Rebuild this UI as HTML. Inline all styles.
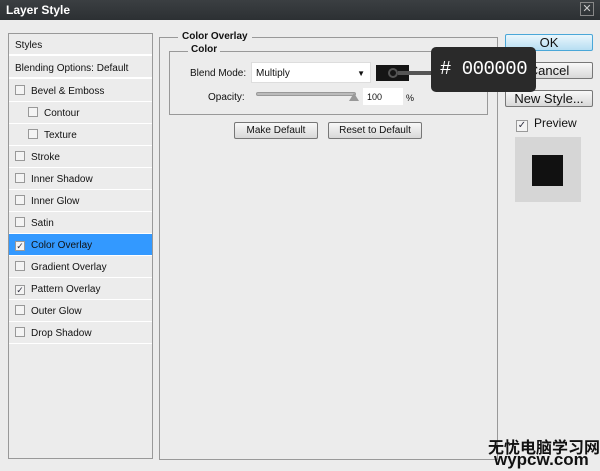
<!DOCTYPE html>
<html><head><meta charset="utf-8"><style>
*{margin:0;padding:0;box-sizing:border-box}
body{width:600px;height:471px;background:#ececec;font-family:"Liberation Sans",Tahoma,sans-serif;font-size:10px;color:#111;position:relative;overflow:hidden}
.a{position:absolute}
.title{left:0;top:0;width:600px;height:20px;background:linear-gradient(#3b3f42,#2c3033);color:#fff;font-weight:bold;font-size:12px;padding:3px 6px}
.close{right:6px;top:2px;width:14px;height:14px;border:1px solid #888;color:#ccc;font-size:11px;line-height:12px;text-align:center}
.left{left:8px;top:33px;width:145px;height:426px;border:1px solid #999;background:#ececec}
.row{position:absolute;left:0;width:143px;height:22px;border-bottom:1px solid #fff;line-height:23px;padding-left:6px}
.cb{display:inline-block;width:10px;height:10px;border:1px solid #999;background:#f4f4f4;vertical-align:-1px;margin-right:6px;font-size:9px;line-height:8px;color:#334;text-align:center}
.sel{background:#3399ff}
.btn{border:1px solid #777;border-radius:2px;background:linear-gradient(#f8f8f8,#d8d8d8);text-align:center;font-size:10px}
</style></head><body>
<div class="a title">Layer Style</div>
<div class="a close">✕</div>

<div class="a left">
<div class="row" style="top:0;border-bottom:2px solid #fff">Styles</div>
<div class="row" style="top:23px;border-bottom:2px solid #fff">Blending Options: Default</div>
<div class="row" style="top:46px"><span class="cb"></span>Bevel &amp; Emboss</div>
<div class="row" style="top:68px;padding-left:19px"><span class="cb"></span>Contour</div>
<div class="row" style="top:90px;padding-left:19px"><span class="cb"></span>Texture</div>
<div class="row" style="top:112px"><span class="cb"></span>Stroke</div>
<div class="row" style="top:134px"><span class="cb"></span>Inner Shadow</div>
<div class="row" style="top:156px"><span class="cb"></span>Inner Glow</div>
<div class="row" style="top:178px"><span class="cb"></span>Satin</div>
<div class="row sel" style="top:200px"><span class="cb">✓</span>Color Overlay</div>
<div class="row" style="top:222px"><span class="cb"></span>Gradient Overlay</div>
<div class="row" style="top:244px"><span class="cb">✓</span>Pattern Overlay</div>
<div class="row" style="top:266px"><span class="cb"></span>Outer Glow</div>
<div class="row" style="top:288px"><span class="cb"></span>Drop Shadow</div>
</div>

<div class="a" style="left:159px;top:37px;width:339px;height:423px;border:1px solid #999"></div>
<div class="a" style="left:178px;top:31px;background:#ececec;padding:0 4px;font-weight:bold">Color Overlay</div>
<div class="a" style="left:169px;top:51px;width:319px;height:64px;border:1px solid #999"></div>
<div class="a" style="left:188px;top:44px;background:#ececec;padding:0 3px;font-weight:bold">Color</div>
<div class="a" style="left:190px;top:68px">Blend Mode:</div>
<div class="a" style="left:251px;top:62px;width:120px;height:21px;background:#fff;border:1px solid #ddd;padding:5px 4px">Multiply<span style="position:absolute;right:5px;top:6px;font-size:8px">▼</span></div>
<div class="a" style="left:376px;top:65px;width:33px;height:16px;background:#151515"></div>
<div class="a" style="left:208px;top:92px">Opacity:</div>
<div class="a" style="left:256px;top:92px;width:100px;height:4px;background:#bbb;border:1px solid #999;border-radius:2px"></div>
<div class="a" style="left:349px;top:93px;width:0;height:0;border-left:5px solid transparent;border-right:5px solid transparent;border-bottom:8px solid #999"></div>
<div class="a" style="left:363px;top:88px;width:40px;height:17px;background:#fff;padding:4px 4px;font-size:9px">100</div>
<div class="a" style="left:406px;top:93px;font-size:9px">%</div>
<div class="a btn" style="left:234px;top:122px;width:84px;height:17px;line-height:16px">Make Default</div>
<div class="a btn" style="left:328px;top:122px;width:94px;height:17px;line-height:16px">Reset to Default</div>

<div class="a btn" style="left:505px;top:34px;width:88px;height:17px;border-color:#4aa7d8;background:linear-gradient(#eaf6fc,#b7def2);font-size:13px;line-height:15px">OK</div>
<div class="a btn" style="left:505px;top:62px;width:88px;height:17px;font-size:13px;line-height:15px">Cancel</div>
<div class="a btn" style="left:505px;top:90px;width:88px;height:17px;font-size:13px;line-height:15px">New Style...</div>
<div class="a" style="left:516px;top:116px;font-size:12px"><span class="cb" style="width:12px;height:12px;font-size:10px;line-height:10px">✓</span>Preview</div>
<div class="a" style="left:515px;top:137px;width:66px;height:65px;background:#d6d6d6"></div>
<div class="a" style="left:532px;top:155px;width:31px;height:31px;background:#111"></div>

<div class="a" style="left:388px;top:68px;width:10px;height:10px;border:2px solid #555;border-radius:50%"></div>
<div class="a" style="left:398px;top:71px;width:35px;height:4px;background:#555"></div>
<div class="a" style="left:431px;top:47px;width:105px;height:45px;background:#2a2a2a;border-radius:5px;color:#fff;font-family:'Liberation Mono',monospace;font-size:19px;line-height:45px;text-align:center;letter-spacing:-0.5px">#&nbsp;000000</div>

<div class="a" style="left:488px;top:434px;font-size:16px;font-weight:bold;font-family:'Liberation Sans','Noto Sans CJK SC',sans-serif">无忧电脑学习网</div>
<div class="a" style="left:494px;top:450px;font-size:17px;font-weight:bold">wypcw.com</div>
</body></html>
